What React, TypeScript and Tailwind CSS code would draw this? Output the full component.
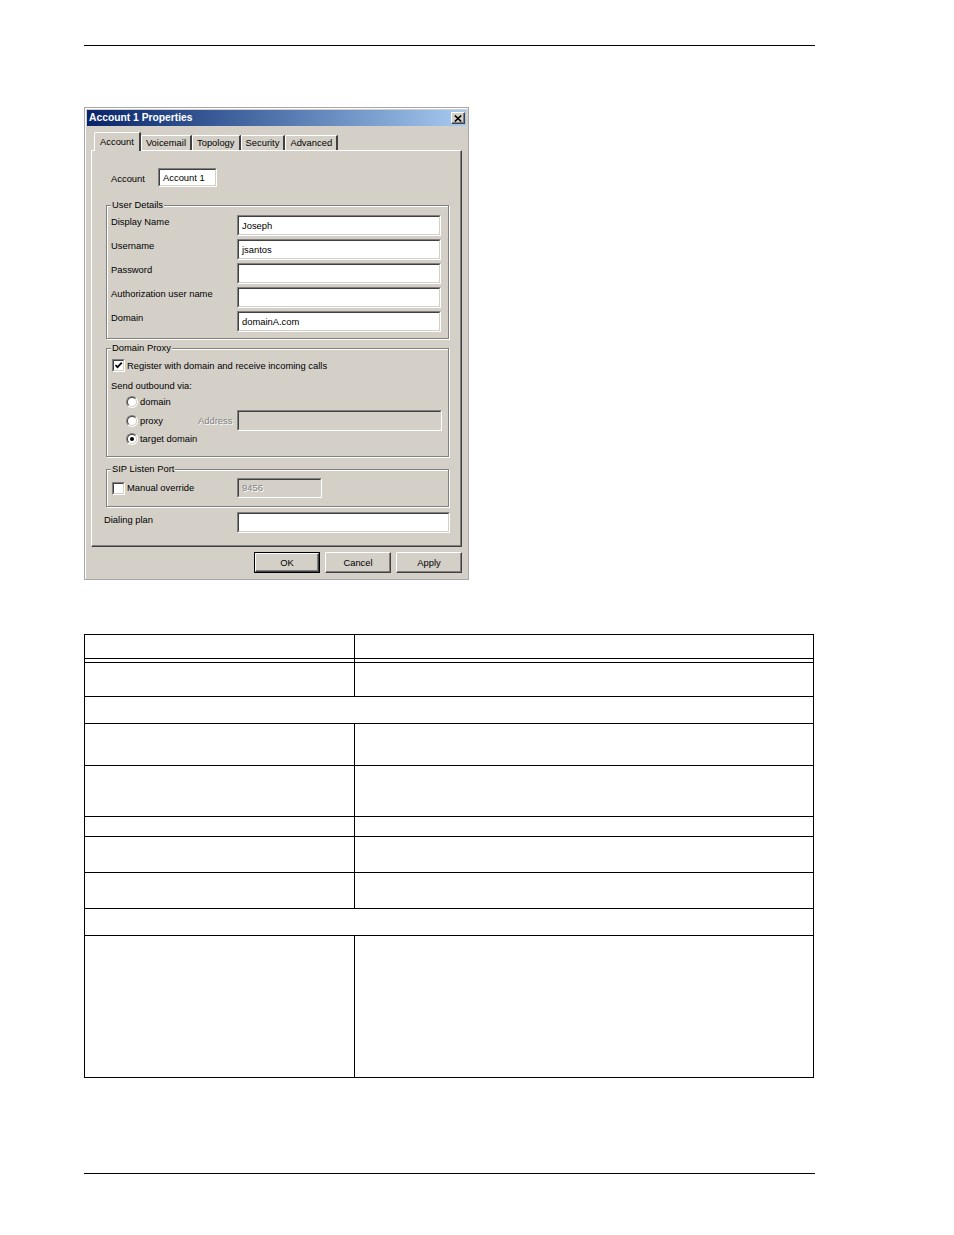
import React from "react";

const sunken =
  "border border-t-[#808080] border-l-[#808080] border-r-white border-b-white";
const sunkenInner =
  "border border-t-[#404040] border-l-[#404040] border-r-[#d4d0c8] border-b-[#d4d0c8]";
const raised =
  "border border-t-white border-l-white border-r-[#404040] border-b-[#404040] shadow-[inset_-1px_-1px_0_#808080]";

function Field({
  className,
  value,
  disabled,
}: {
  className: string;
  value?: string;
  disabled?: boolean;
}) {
  return (
    <div className={`${className} ${sunken} shrink-0`}>
      <div
        className={`h-full w-full ${sunkenInner} ${
          disabled ? "bg-[#d4d0c8] text-[#808080] [text-shadow:1px_1px_0_#fff]" : "bg-white text-black"
        } flex items-center pl-[3px] leading-[12px]`}
      >
        {value}
      </div>
    </div>
  );
}

function Checkbox({ checked }: { checked?: boolean }) {
  return (
    <div className={`w-[13px] h-[13px] shrink-0 ${sunken}`}>
      <div className={`w-full h-full ${sunkenInner} bg-white flex items-center justify-center`}>
        {checked && (
          <svg width="9" height="9" viewBox="0 0 9 9">
            <path d="M1.5 4 L3.5 6.2 L7.8 1.6" fill="none" stroke="#000" strokeWidth="1.7" />
          </svg>
        )}
      </div>
    </div>
  );
}

function Radio({ checked }: { checked?: boolean }) {
  return (
    <div className="w-[12px] h-[12px] shrink-0 rounded-full border border-t-[#808080] border-l-[#808080] border-r-white border-b-white">
      <div className="w-full h-full rounded-full border border-t-[#404040] border-l-[#404040] border-r-[#d4d0c8] border-b-[#d4d0c8] bg-white flex items-center justify-center">
        {checked && <div className="w-[4px] h-[4px] rounded-full bg-black" />}
      </div>
    </div>
  );
}

function Group({
  legend,
  className,
  children,
}: {
  legend: string;
  className: string;
  children: React.ReactNode;
}) {
  return (
    <fieldset
      className={`ml-[14px] w-[343px] border border-[#808080] shadow-[inset_1px_1px_0_#fff,1px_1px_0_#fff] ${className}`}
    >
      <legend className="ml-[4px] px-[1px] leading-[12px] bg-[#d4d0c8]">{legend}</legend>
      {children}
    </fieldset>
  );
}

function UserRow({ label, value, first }: { label: string; value?: string; first?: boolean }) {
  return (
    <div className={`flex items-start pl-[4px] ${first ? "mt-[4px]" : "mt-[3px]"}`}>
      <div className="w-[126px] pt-[1px] leading-[12px]">{label}</div>
      <Field className="w-[204px] h-[21px]" value={value} />
    </div>
  );
}

function Tab({ label, selected }: { label: string; selected?: boolean }) {
  if (selected) {
    return (
      <div className="relative z-10 mb-[-1px] ml-[3px] h-[19px] px-[5px] pt-[3px] bg-[#d4d0c8] border-l border-t border-white border-r-2 border-r-[#404040] leading-[12px] rounded-tl-[2px]">
        {label}
      </div>
    );
  }
  return (
    <div className="h-[15px] px-[4px] pt-[1px] border-l border-t border-white border-r-2 border-r-[#404040] leading-[12px] rounded-tl-[2px]">
      {label}
    </div>
  );
}

function Button({ label, isDefault }: { label: string; isDefault?: boolean }) {
  return (
    <div className={`w-[66px] h-[21px] ${isDefault ? "border border-black" : ""}`}>
      <div className={`w-full h-full ${raised} flex items-center justify-center leading-[12px]`}>
        {label}
      </div>
    </div>
  );
}

function Dialog() {
  return (
    <div className="mt-[61px] w-[385px] h-[473px] border border-[#a8a8a8] bg-[#d4d0c8] p-[2px] flex flex-col shadow-[inset_1px_1px_0_#fff] font-['Liberation_Sans',Arial,sans-serif] text-[9.4px] text-black">
      {/* title bar */}
      <div className="h-[16px] flex items-center justify-between bg-gradient-to-r from-[#0a246a] to-[#a6caf0]">
        <span className="pl-[2px] text-white font-bold text-[10.3px] leading-[12px]">
          Account 1 Properties
        </span>
        <div className={`mr-[1px] w-[14px] h-[12px] bg-[#d4d0c8] ${raised} flex items-center justify-center`}>
          <svg width="8" height="7" viewBox="0 0 8 7">
            <path d="M0.8 0.5 L7.2 6.5 M7.2 0.5 L0.8 6.5" stroke="#000" strokeWidth="1.6" />
          </svg>
        </div>
      </div>

      {/* tabs */}
      <div className="mt-[6px] ml-[4px] flex items-end h-[18px]">
        <Tab label="Account" selected />
        <Tab label="Voicemail" />
        <Tab label="Topology" />
        <Tab label="Security" />
        <Tab label="Advanced" />
      </div>

      {/* panel */}
      <div className="ml-[4px] w-[371px] h-[397px] border border-t-white border-l-white border-r-[#404040] border-b-[#404040] shadow-[inset_-1px_-1px_0_#808080]">
        <div className="mt-[17px] flex items-center pl-[19px]">
          <div className="w-[47px] leading-[12px] pt-[2px]">Account</div>
          <Field className="w-[59px] h-[19px]" value="Account 1" />
        </div>

        <Group legend="User Details" className="mt-[12px] pb-[6px]">
          <UserRow label="Display Name" value="Joseph" first />
          <UserRow label="Username" value="jsantos" />
          <UserRow label="Password" />
          <UserRow label="Authorization user name" />
          <UserRow label="Domain" value="domainA.com" />
        </Group>

        <Group legend="Domain Proxy" className="mt-[3px] pb-[11px]">
          <div className="mt-[5px] pl-[5px] flex items-center gap-[2px] h-[13px]">
            <Checkbox checked />
            <span className="leading-[12px]">Register with domain and receive incoming calls</span>
          </div>
          <div className="mt-[8px] pl-[4px] leading-[12px]">Send outbound via:</div>
          <div className="mt-[4px] pl-[19px] flex items-center gap-[2px] h-[12px]">
            <Radio />
            <span className="leading-[12px]">domain</span>
          </div>
          <div className="mt-[2px] pl-[19px] flex items-center h-[21px]">
            <div className="w-[72px] flex items-center gap-[2px]">
              <Radio />
              <span className="leading-[12px]">proxy</span>
            </div>
            <div className="w-[39px] leading-[12px] text-[#808080] [text-shadow:1px_1px_0_#fff]">Address</div>
            <Field className="w-[205px] h-[21px]" disabled />
          </div>
          <div className="mt-[2px] pl-[19px] flex items-center gap-[2px] h-[12px]">
            <Radio checked />
            <span className="leading-[12px]">target domain</span>
          </div>
        </Group>

        <Group legend="SIP Listen Port" className="mt-[6px] pb-[8px]">
          <div className="mt-[3px] pl-[5px] flex items-center h-[20px]">
            <div className="w-[125px] flex items-center gap-[2px]">
              <Checkbox />
              <span className="leading-[12px]">Manual override</span>
            </div>
            <Field className="w-[85px] h-[20px]" value="9456" disabled />
          </div>
        </Group>

        <div className="mt-[5px] pl-[12px] flex items-start">
          <div className="w-[133px] pt-[2px] leading-[12px]">Dialing plan</div>
          <Field className="w-[213px] h-[21px]" />
        </div>
      </div>

      {/* buttons */}
      <div className="mt-[5px] ml-[4px] w-[371px] flex justify-end gap-[5px]">
        <Button label="OK" isDefault />
        <Button label="Cancel" />
        <Button label="Apply" />
      </div>
    </div>
  );
}

function Row({ h, full }: { h: string; full?: boolean }) {
  return (
    <div className={`${h} flex border-b border-black`}>
      {!full && <div className="w-[270px] h-full border-r border-black" />}
    </div>
  );
}

export default function App() {
  return (
    <div className="w-[954px] h-[1235px] bg-white pl-[84px] pt-[45px]">
      <div className="w-[731px] h-[1px] bg-black" />
      <Dialog />
      <div className="mt-[54px] w-[730px] border border-black">
        <Row h="h-[24px]" />
        <Row h="h-[4px]" />
        <Row h="h-[34px]" />
        <Row h="h-[27px]" full />
        <Row h="h-[42px]" />
        <Row h="h-[51px]" />
        <Row h="h-[20px]" />
        <Row h="h-[36px]" />
        <Row h="h-[36px]" />
        <Row h="h-[27px]" full />
        <div className="h-[141px] flex">
          <div className="w-[270px] h-full border-r border-black" />
        </div>
      </div>
      <div className="mt-[95px] w-[731px] h-[1px] bg-black" />
    </div>
  );
}
